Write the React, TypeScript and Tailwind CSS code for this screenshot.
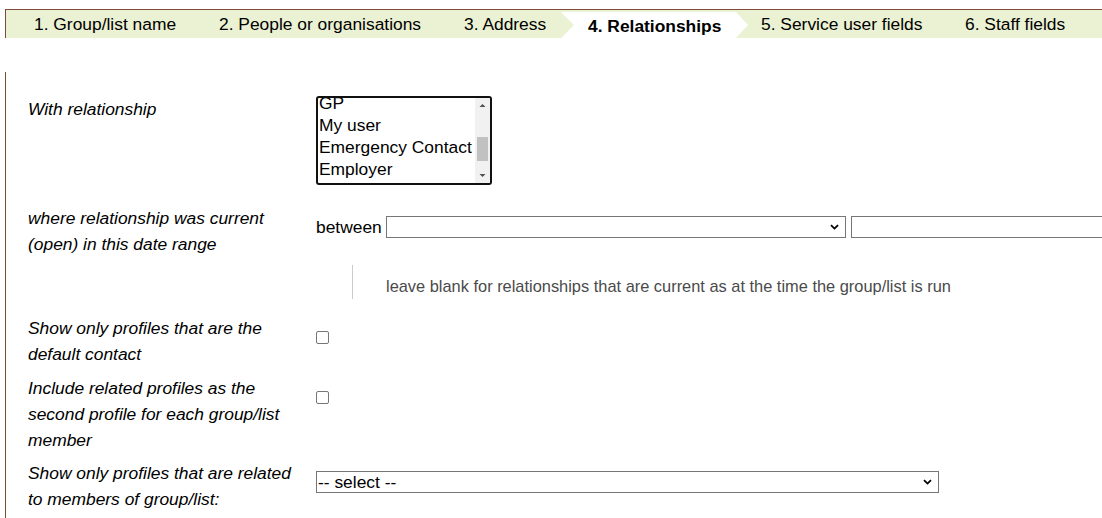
const tabs = [
  { label: "1. Group/list name", w: "w-[213px] pl-[28px]" },
  { label: "2. People or organisations", w: "w-[245px]" },
  { label: "3. Address", w: "w-[97px]" },
];

function Chevron() {
  return (
    <svg width="9" height="6" viewBox="0 0 9 6" className="shrink-0">
      <path d="M1 1.2 L4.5 4.6 L8 1.2" fill="none" stroke="#000" strokeWidth="1.8" />
    </svg>
  );
}

function SelectBox({ className, text }: { className: string; text?: string }) {
  return (
    <div className={`flex h-[22px] shrink-0 items-center justify-between border border-[#767676] bg-white pl-[1px] pr-[6px] leading-[20px] ${className}`}>
      <span>{text ?? ""}</span>
      <Chevron />
    </div>
  );
}

function Checkbox() {
  return <div className="h-[13px] w-[13px] rounded-[2px] border border-[#767676] bg-white" />;
}

function ListBox() {
  const items = ["GP", "My user", "Emergency Contact", "Employer"];
  return (
    <div className="flex h-[89px] w-[176px] shrink-0 overflow-hidden rounded-[3px] border-2 border-[#111] bg-white">
      <div className="flex-1 overflow-hidden pl-[1px]">
        <div className="-mt-[6px] leading-[22px]">
          {items.map((i) => (
            <div key={i} className="whitespace-nowrap">
              {i}
            </div>
          ))}
        </div>
      </div>
      <div className="relative w-[15px] shrink-0 bg-[#f1f1f1]">
        <svg width="15" height="85" viewBox="0 0 15 85" className="absolute left-0 top-0">
          <path d="M4.5 9 L7.5 6 L10.5 9 Z" fill="#505050" />
          <path d="M4.5 76 L7.5 79 L10.5 76 Z" fill="#505050" />
        </svg>
        <div className="absolute left-[2px] top-[39px] h-[24px] w-[11px] bg-[#c1c1c1]" />
      </div>
    </div>
  );
}

export default function App() {
  return (
    <div className="h-[518px] w-[1102px] overflow-hidden bg-white font-['Liberation_Sans',Arial,sans-serif] text-[17.4px] text-black">
      {/* step tabs */}
      <div className="ml-[5px] mt-[9px] flex h-[29px] border-l border-t border-[#7d4b36] bg-[#ebf1d3]">
        {tabs.map((t) => (
          <div key={t.label} className={`flex shrink-0 items-center whitespace-nowrap pt-[1px] ${t.w}`}>
            {t.label}
          </div>
        ))}
        <div className="mt-[2px] flex h-[26px] w-[187px] shrink-0 items-center bg-white pl-[27px] pt-[3px] font-bold whitespace-nowrap [clip-path:polygon(0_0,175px_0,100%_50%,175px_100%,0_100%,13px_50%)]">
          4. Relationships
        </div>
        <div className="flex w-[217px] shrink-0 items-center whitespace-nowrap pl-[13px] pt-[1px]">5. Service user fields</div>
        <div className="flex items-center whitespace-nowrap pt-[1px]">6. Staff fields</div>
      </div>

      {/* form */}
      <div className="ml-[5px] mt-[34px] h-[500px] border-l border-[#7d4b36] pl-[22px] pt-[24px]">
        <div className="flex items-start">
          <div className="w-[288px] shrink-0 italic leading-[26px]">With relationship</div>
          <ListBox />
        </div>

        <div className="mt-[20px] flex items-start">
          <div className="w-[288px] shrink-0 pr-[12px] italic leading-[26px]">
            where relationship was current (open) in this date range
          </div>
          <div className="mt-[11px] flex h-[22px] items-center">
            <span className="leading-[22px]">between</span>
            <SelectBox className="ml-[4px] w-[460px]" />
            <div className="ml-[5px] h-[22px] w-[260px] shrink-0 border border-[#767676]" />
          </div>
        </div>

        <div className="ml-[324px] mt-[8px] h-[34px] border-l border-[#cccccc] pl-[33px] pt-[11px] text-[16.4px] leading-[20px] whitespace-nowrap text-[#4a4a4a]">
          leave blank for relationships that are current as at the time the group/list is run
        </div>

        <div className="mt-[16px] flex items-start">
          <div className="w-[288px] shrink-0 pr-[12px] italic leading-[26px]">
            Show only profiles that are the default contact
          </div>
          <div className="pt-[16px]">
            <Checkbox />
          </div>
        </div>

        <div className="mt-[8px] flex items-start">
          <div className="w-[288px] shrink-0 pr-[12px] italic leading-[26px]">
            Include related profiles as the second profile for each group/list member
          </div>
          <div className="pt-[16px]">
            <Checkbox />
          </div>
        </div>

        <div className="mt-[7px] flex items-start">
          <div className="w-[288px] shrink-0 pr-[12px] italic leading-[26px]">
            Show only profiles that are related to members of group/list:
          </div>
          <div className="pt-[11px]">
            <SelectBox className="w-[623px]" text="-- select --" />
          </div>
        </div>
      </div>
    </div>
  );
}
